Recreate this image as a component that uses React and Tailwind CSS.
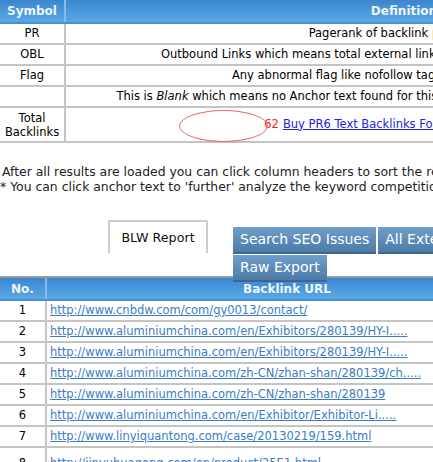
export default function App() {
  const defs = [
    ["PR", "Pagerank of backlink page (0-10)"],
    ["OBL", "Outbound Links which means total external links on the backlink page, less is better"],
    ["Flag", "Any abnormal flag like nofollow tag or javascript redirection"],
  ];
  const urls = [
    "http://www.cnbdw.com/com/gy0013/contact/",
    "http://www.aluminiumchina.com/en/Exhibitors/280139/HY-I.....",
    "http://www.aluminiumchina.com/en/Exhibitors/280139/HY-I.....",
    "http://www.aluminiumchina.com/zh-CN/zhan-shan/280139/ch.....",
    "http://www.aluminiumchina.com/zh-CN/zhan-shan/280139",
    "http://www.aluminiumchina.com/en/Exhibitor/Exhibitor-Li.....",
    "http://www.linyiquantong.com/case/20130219/159.html",
  ];
  const btn =
    "shrink-0 h-[27px] px-[7px] flex items-center text-white bg-linear-to-b from-[#6f9fc9] to-[#4c7ba8] border-b-2 border-[#3d6690]";
  return (
    <div className="w-[433px] h-[462px] overflow-hidden bg-white relative text-black [font-family:'DejaVu_Sans',Verdana,sans-serif]">
      {/* Top definitions table */}
      <div className="w-[742px] text-[11.5px]">
        <div className="flex h-[24px] bg-linear-to-b from-[#3a87cf] to-[#5aa8e6] border-b-2 border-[#4b8fcf] text-[#eef5fc] font-bold text-[12px]">
          <div className="w-[66px] border-r-2 border-[#86bbe8] flex items-center justify-center">Symbol</div>
          <div className="flex-1 flex items-center justify-center">Definition</div>
        </div>
        {defs.map(([s, d]) => (
          <div key={s} className="flex h-[21px] border-b-2 border-[#c4c4c4]">
            <div className="w-[66px] border-r-2 border-[#c4c4c4] flex items-center justify-center">{s}</div>
            <div className="flex-1 flex items-center justify-center">{d}</div>
          </div>
        ))}
        <div className="flex h-[21px] border-b-2 border-[#c4c4c4]">
          <div className="w-[66px] border-r-2 border-[#c4c4c4]"></div>
          <div className="flex-1 flex items-center justify-center">
            <span>
              This is <i>Blank</i> which means no Anchor text found for this backlink, it may be an image link or no text
            </span>
          </div>
        </div>
        <div className="flex h-[35px] border-b-2 border-[#c4c4c4]">
          <div className="w-[66px] border-r-2 border-[#c4c4c4] flex flex-col items-center justify-center leading-[14px]">
            <span>Total</span>
            <span>Backlinks</span>
          </div>
          <div className="flex-1 flex items-center justify-center">
            <span className="text-[#ee1c1c]">62</span>
            <span className="ml-[4px] text-[#2222dd] underline">Buy PR6 Text Backlinks For Only $9.95/Month</span>
          </div>
        </div>
      </div>

      {/* ellipse highlight */}
      <div className="absolute left-[179px] top-[110px] w-[89px] h-[32px] rounded-[50%] border border-[#f06a6a]"></div>

      {/* Notes */}
      <div className="mt-[21px] text-[12.4px] leading-[15px] whitespace-nowrap text-[#222]">
        <div className="pl-[2px]">After all results are loaded you can click column headers to sort the results</div>
        <div>* You can click anchor text to 'further' analyze the keyword competition</div>
      </div>

      {/* Tabs / buttons */}
      <div className="mt-[26px] h-[56px] flex items-start whitespace-nowrap">
        <div className="shrink-0 ml-[108px] w-[100px] h-[33px] border-2 border-b-0 border-[#cccccc] rounded-t-[2px] flex items-center justify-center text-[#111] text-[12.7px]">
          BLW Report
        </div>
        <div className="shrink-0 relative z-10 ml-[25px] mt-[7px] flex flex-col gap-[1px] text-[14px]">
          <div className="flex gap-[2px]">
            <div className={btn}>Search SEO Issues</div>
            <div className={btn}>All External Links</div>
          </div>
          <div className="flex">
            <div className={btn}>Raw Export</div>
          </div>
        </div>
      </div>

      {/* Backlinks table */}
      <div className="w-[700px] text-[11.5px]">
        <div className="flex h-[25px] bg-linear-to-b from-[#3a87cf] to-[#5aa8e6] border-t-2 border-[#9a9a9a] border-b-2 border-b-[#4b8fcf] text-[#eef5fc] font-bold text-[12px]">
          <div className="w-[47px] border-r-2 border-[#86bbe8] flex items-center justify-center">No.</div>
          <div className="w-[480px] flex items-center justify-center">Backlink URL</div>
          <div className="flex-1"></div>
        </div>
        {urls.map((u, i) => (
          <div key={i} className="flex h-[21px] border-b-2 border-[#c4c4c4]">
            <div className="w-[47px] border-r-2 border-[#c4c4c4] flex items-center justify-center">{i + 1}</div>
            <div className="w-[480px] flex items-center pl-[3px]">
              <span className="text-[#3b7cc6] underline">{u}</span>
            </div>
            <div className="flex-1"></div>
          </div>
        ))}
        <div className="flex h-[34px] border-b-2 border-[#c4c4c4]">
          <div className="w-[47px] border-r-2 border-[#c4c4c4] flex items-center justify-center">8</div>
          <div className="w-[480px] flex items-center pl-[3px]">
            <span className="text-[#3b7cc6] underline">http://jinyuhuagong.com/en/product/25E1.html</span>
          </div>
          <div className="flex-1"></div>
        </div>
      </div>
    </div>
  );
}
